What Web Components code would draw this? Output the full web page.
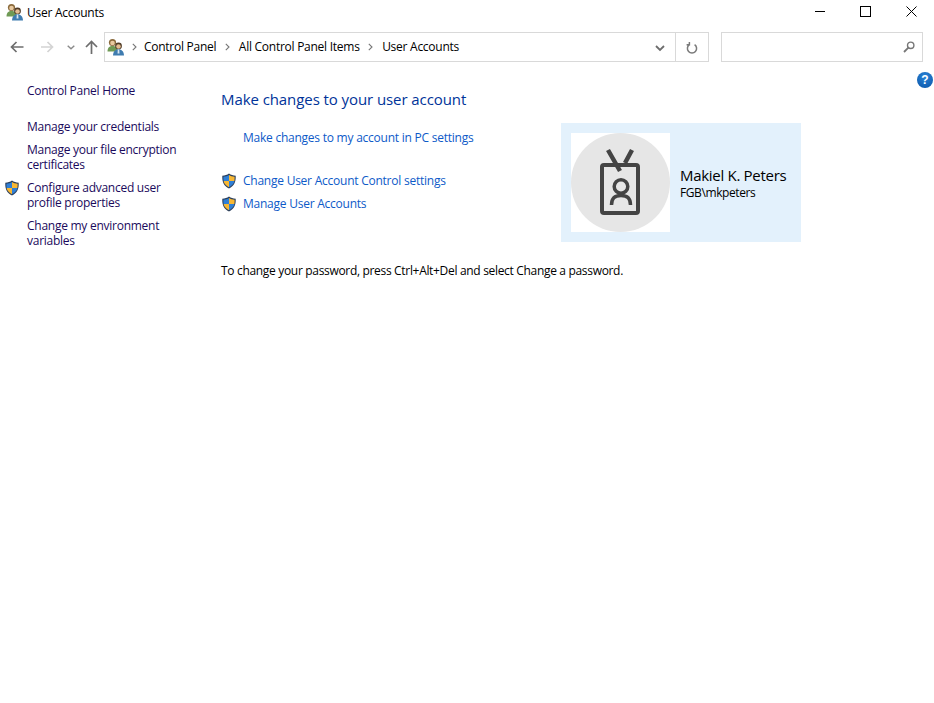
<!DOCTYPE html>
<html>
<head>
<meta charset="utf-8">
<title>User Accounts</title>
<style>
    html, body { margin: 0; padding: 0; background: #fff; }
    body { font: 12px "Open Sans", "Noto Sans", sans-serif; letter-spacing: -0.26px; color: #000; height: 703px; overflow: hidden; }
</style>
</head>
<body>
<template id="users-tpl">
    <style>
        :host { display: inline-block; width: 18px; height: 18px; line-height: 0; }
        svg { width: 100%; height: 100%; }
    </style>
    <svg viewBox="0 0 18 18">
        <circle cx="5.5" cy="4.5" r="3.6" fill="#8a6a3c"/>
        <circle cx="5.5" cy="5" r="2.3" fill="#e8c9a0"/>
        <path d="M.5 13.500c0-3.800 2-5.500 5-5.500s5 1.700 5 5.500z" fill="#6f9a55"/>
        <circle cx="11.500" cy="8" r="3.400" fill="#4f3a25"/>
        <circle cx="11.500" cy="8.500" r="2.300" fill="#e3bd92"/>
        <path d="M6 17.500c0-4 2.400-6.300 5.500-6.300s5.500 2.300 5.500 6.300z" fill="#3f7cb0"/>
        <path d="M10.800 11.500h1.400l.3 4h-2z" fill="#d7e6f2"/>
    </svg>
</template>

<template id="shield-tpl">
    <style>
        :host { display: inline-block; width: 16px; height: 16px; line-height: 0; flex: none; }
        svg { width: 100%; height: 100%; }
    </style>
    <svg viewBox="0 0 16 16">
        <path d="M8 .6C6 2 4 2.600 1.300 2.800c-.3 6 1.500 10.300 6.700 12.700 5.200-2.400 7-6.700 6.700-12.700C12 2.600 10 2 8 .6z" fill="#2b3f5c"/>
        <path d="M8 2v6H2.600C2.400 6.500 2.300 5.300 2.400 3.800 4.500 3.600 6.300 3.100 8 2z" fill="#2f7fd6"/>
        <path d="M8 2c1.700 1.100 3.500 1.600 5.600 1.800.1 1.500 0 2.700-.2 4.200H8z" fill="#f7b733"/>
        <path d="M2.600 8H8v6.200C5 12.700 3.200 10.800 2.600 8z" fill="#f7b733"/>
        <path d="M8 8h5.400C12.800 10.800 11 12.700 8 14.200z" fill="#2f7fd6"/>
    </svg>
</template>

<template id="titlebar-tpl">
    <style>
        :host { display: flex; align-items: center; height: 32px; box-sizing: border-box; padding: 0 0 8px 6px; }
        .title { margin-left: 3px; flex: 1; color: #000; }
        .btns { display: flex; align-self: flex-start; }
        .btn { width: 45.500px; height: 23px; display: flex; align-items: center; justify-content: center; }
        svg { width: 11px; height: 11px; margin-top: 0; }
    </style>
    <ui-users></ui-users>
    <span class="title">User Accounts</span>
    <div class="btns">
        <div class="btn"><svg viewBox="0 0 11 11"><path d="M0 5.500h10" stroke="#000" stroke-width="1" fill="none"/></svg></div>
        <div class="btn"><svg viewBox="0 0 11 11"><rect x=".5" y=".5" width="10" height="10" stroke="#000" fill="none"/></svg></div>
        <div class="btn"><svg viewBox="0 0 11 11"><path d="M.5.500l10 10M10.500.500l-10 10" stroke="#000" stroke-width="1" fill="none"/></svg></div>
    </div>
</template>

<template id="navbar-tpl">
    <style>
        :host { display: flex; height: 30px; padding-left: 10px; padding-right: 11px; }
        .arrows { display: flex; align-items: center; width: 94px; flex: none; }
        .arrows svg { display: block; flex: none; }
        .address { flex: none; width: 605px; box-sizing: border-box; border: 1px solid #d9d9d9; display: flex; align-items: center; }
        .crumbs { flex: 1; display: flex; align-items: center; padding-left: 2px; padding-bottom: 1px; }
        .sep { width: 22.500px; display: flex; justify-content: center; }
        .sep.first { width: 19px; }
        .sep svg { display: block; }
        .drop { width: 30px; height: 100%; box-sizing: border-box; display: flex; align-items: center; justify-content: center; padding-top: 2px; }
        .refresh { width: 33px; height: 100%; border-left: 1px solid #d9d9d9; display: flex; align-items: center; justify-content: center; box-sizing: border-box; }
        .search { flex: none; width: 202px; margin-left: 12px; box-sizing: border-box; border: 1px solid #d9d9d9; display: flex; align-items: center; justify-content: flex-end; padding-right: 7px; }
    </style>
    <div class="arrows">
        <svg width="14" height="12" viewBox="0 0 14 12" style="margin-right:17px"><path d="M13.500 6H1.500M6.500 1l-5 5 5 5" stroke="#6d6d6d" stroke-width="1.700" fill="none"/></svg>
        <svg width="13" height="12" viewBox="0 0 13 12" style="margin-right:13px"><path d="M0 6h11.500M6.500 1l5 5-5 5" stroke="#d4d4d4" stroke-width="1.700" fill="none"/></svg>
        <svg width="8" height="5" viewBox="0 0 8 5" style="margin-right:10px"><path d="M.7.700L4 3.800 7.300.700" stroke="#8a8a8a" stroke-width="1.400" fill="none"/></svg>
        <svg width="13" height="14" viewBox="0 0 13 14"><path d="M6.500 14V2M1 7l5.500-5.500L12 7" stroke="#6d6d6d" stroke-width="1.700" fill="none"/></svg>
    </div>
    <div class="address">
        <div class="crumbs">
            <ui-users></ui-users>
            <span class="sep first"><svg width="5" height="8" viewBox="0 0 5 8"><path d="M.8.800L4 4 .8 7.200" stroke="#777" stroke-width="1.100" fill="none"/></svg></span>
            <span>Control Panel</span>
            <span class="sep"><svg width="5" height="8" viewBox="0 0 5 8"><path d="M.8.800L4 4 .8 7.200" stroke="#777" stroke-width="1.100" fill="none"/></svg></span>
            <span>All Control Panel Items</span>
            <span class="sep"><svg width="5" height="8" viewBox="0 0 5 8"><path d="M.8.800L4 4 .8 7.200" stroke="#777" stroke-width="1.100" fill="none"/></svg></span>
            <span>User Accounts</span>
        </div>
        <div class="drop"><svg width="10" height="7" viewBox="0 0 10 7"><path d="M1 1l4 4 4-4" stroke="#6d6d6d" stroke-width="1.800" fill="none"/></svg></div>
        <div class="refresh"><svg width="12" height="13" viewBox="0 0 12 13"><path d="M8.600 3.600a4.600 4.600 0 1 1-5.200 0M3.400 1v2.800H.6" stroke="#7a7a7a" stroke-width="1.500" fill="none"/></svg></div>
    </div>
    <div class="search">
        <svg width="12" height="12" viewBox="0 0 12 12"><circle cx="7.700" cy="4.300" r="3.200" stroke="#777" stroke-width="1.400" fill="none"/><path d="M5.400 6.600L1 11" stroke="#777" stroke-width="1.800" fill="none"/></svg>
    </div>
</template>

<template id="side-tpl">
    <style>
        :host { display: block; width: 221px; flex: none; box-sizing: border-box; padding: 21px 0 0 27px; color: #1a0a5c; line-height: 15px; }
        .home { margin-bottom: 21px; }
    </style>
    <div class="home"><slot name="home"></slot></div>
    <slot></slot>
</template>

<template id="side-link-tpl">
    <style>
        :host { display: block; position: relative; width: 170px; margin-bottom: 8px; }
        ::slotted(ui-shield) { position: absolute; left: -23px; top: 0; }
    </style>
    <slot name="icon"></slot><slot></slot>
</template>

<template id="task-link-tpl">
    <style>
        :host { display: flex; align-items: center; height: 15px; margin-bottom: 8px; color: #0d5ac8; }
        .ic { width: 22px; flex: none; display: flex; }
    </style>
    <span class="ic"><slot name="icon"></slot></span><slot></slot>
</template>

<template id="card-tpl">
    <style>
        :host { display: flex; align-items: center; width: 240px; height: 119px; flex: none; box-sizing: border-box; padding-left: 10px; background: #e3f1fc; }
        .pic { width: 99px; height: 99px; background: #fff; flex: none; margin-right: 10px; }
        svg { display: block; width: 100%; height: 100%; }
        .name { font-size: 15px; line-height: 20px; color: #000; letter-spacing: -0.3px; }
        .acct { line-height: 15px; color: #000; letter-spacing: -0.4px; }
    </style>
    <div class="pic">
        <svg viewBox="0 0 99 99">
            <circle cx="49.500" cy="49.500" r="49.500" fill="#e6e6e6"/>
            <rect x="31" y="32" width="36" height="48" rx="2" stroke="#444" stroke-width="4" fill="none"/>
            <path d="M37 17l12 21M61 17l-7 13" stroke="#444" stroke-width="4.500" fill="none"/>
            <circle cx="50" cy="53.500" r="6.800" stroke="#444" stroke-width="3.500" fill="none"/>
            <path d="M40.500 72c0-7 3-9.500 9.500-9.500s9.500 2.500 9.500 9.500" stroke="#444" stroke-width="3.500" fill="none"/>
        </svg>
    </div>
    <div class="info">
        <div class="name"><slot name="name"></slot></div>
        <div class="acct"><slot name="account"></slot></div>
    </div>
</template>

<template id="help-tpl">
    <style>
        :host { position: absolute; left: 917px; top: 72px; width: 16px; height: 16px; border-radius: 50%; background: radial-gradient(circle at 50% 30%, #2a83d6, #0a55a8); color: #fff; font: bold 12px/16px "Liberation Sans", sans-serif; text-align: center; letter-spacing: 0; }
    </style>
    ?
</template>

<template id="main-tpl">
    <style>
        :host { display: block; flex: 1; padding-top: 27px; }
        h1 { margin: 0 0 14px; font-size: 15px; font-weight: normal; line-height: 20px; color: #003399; letter-spacing: -0.08px; }
        .row { display: flex; height: 119px; }
        .links { width: 340px; flex: none; letter-spacing: -0.24px; }
        .settings { height: 27px; padding-top: 7px; box-sizing: border-box; margin-bottom: 23px; }
        .pw { margin-top: 21px; line-height: 15px; color: #000; letter-spacing: -0.32px; }
    </style>
    <h1><slot name="heading"></slot></h1>
    <div class="row">
        <div class="links">
            <div class="settings"><slot name="settings"></slot></div>
            <slot name="tasks"></slot>
        </div>
        <slot name="card"></slot>
    </div>
    <div class="pw"><slot name="note"></slot></div>
</template>

<template id="window-tpl">
    <style>
        :host { display: block; position: relative; }
        .content { display: flex; }
    </style>
    <slot name="title"></slot>
    <slot name="nav"></slot>
    <slot name="help"></slot>
    <div class="content"><slot></slot></div>
</template>

<ui-window>
    <ui-titlebar slot="title"></ui-titlebar>
    <ui-navbar slot="nav"></ui-navbar>
    <ui-help slot="help"></ui-help>
    <ui-side>
        <span slot="home">Control Panel Home</span>
        <ui-side-link>Manage your credentials</ui-side-link>
        <ui-side-link>Manage your file encryption certificates</ui-side-link>
        <ui-side-link><ui-shield slot="icon"></ui-shield>Configure advanced user profile properties</ui-side-link>
        <ui-side-link>Change my environment variables</ui-side-link>
    </ui-side>
    <ui-main>
        <span slot="heading">Make changes to your user account</span>
        <ui-task-link slot="settings">Make changes to my account in PC settings</ui-task-link>
        <ui-task-link slot="tasks"><ui-shield slot="icon"></ui-shield>Change User Account Control settings</ui-task-link>
        <ui-task-link slot="tasks"><ui-shield slot="icon"></ui-shield>Manage User Accounts</ui-task-link>
        <ui-card slot="card">
            <span slot="name">Makiel K. Peters</span>
            <span slot="account">FGB\mkpeters</span>
        </ui-card>
        <span slot="note">To change your password, press Ctrl+Alt+Del and select Change a password.</span>
    </ui-main>
</ui-window>

<script>
    function define(tag, tplId) {
        customElements.define(tag, class extends HTMLElement {
            constructor() {
                super();
                this.attachShadow({ mode: 'open' });
                this.shadowRoot.appendChild(document.getElementById(tplId).content.cloneNode(true));
            }
        });
    }

    define('ui-users', 'users-tpl');
    define('ui-shield', 'shield-tpl');
    define('ui-titlebar', 'titlebar-tpl');
    define('ui-navbar', 'navbar-tpl');
    define('ui-side', 'side-tpl');
    define('ui-side-link', 'side-link-tpl');
    define('ui-task-link', 'task-link-tpl');
    define('ui-card', 'card-tpl');
    define('ui-help', 'help-tpl');
    define('ui-main', 'main-tpl');
    define('ui-window', 'window-tpl');
</script>
</body>
</html>
